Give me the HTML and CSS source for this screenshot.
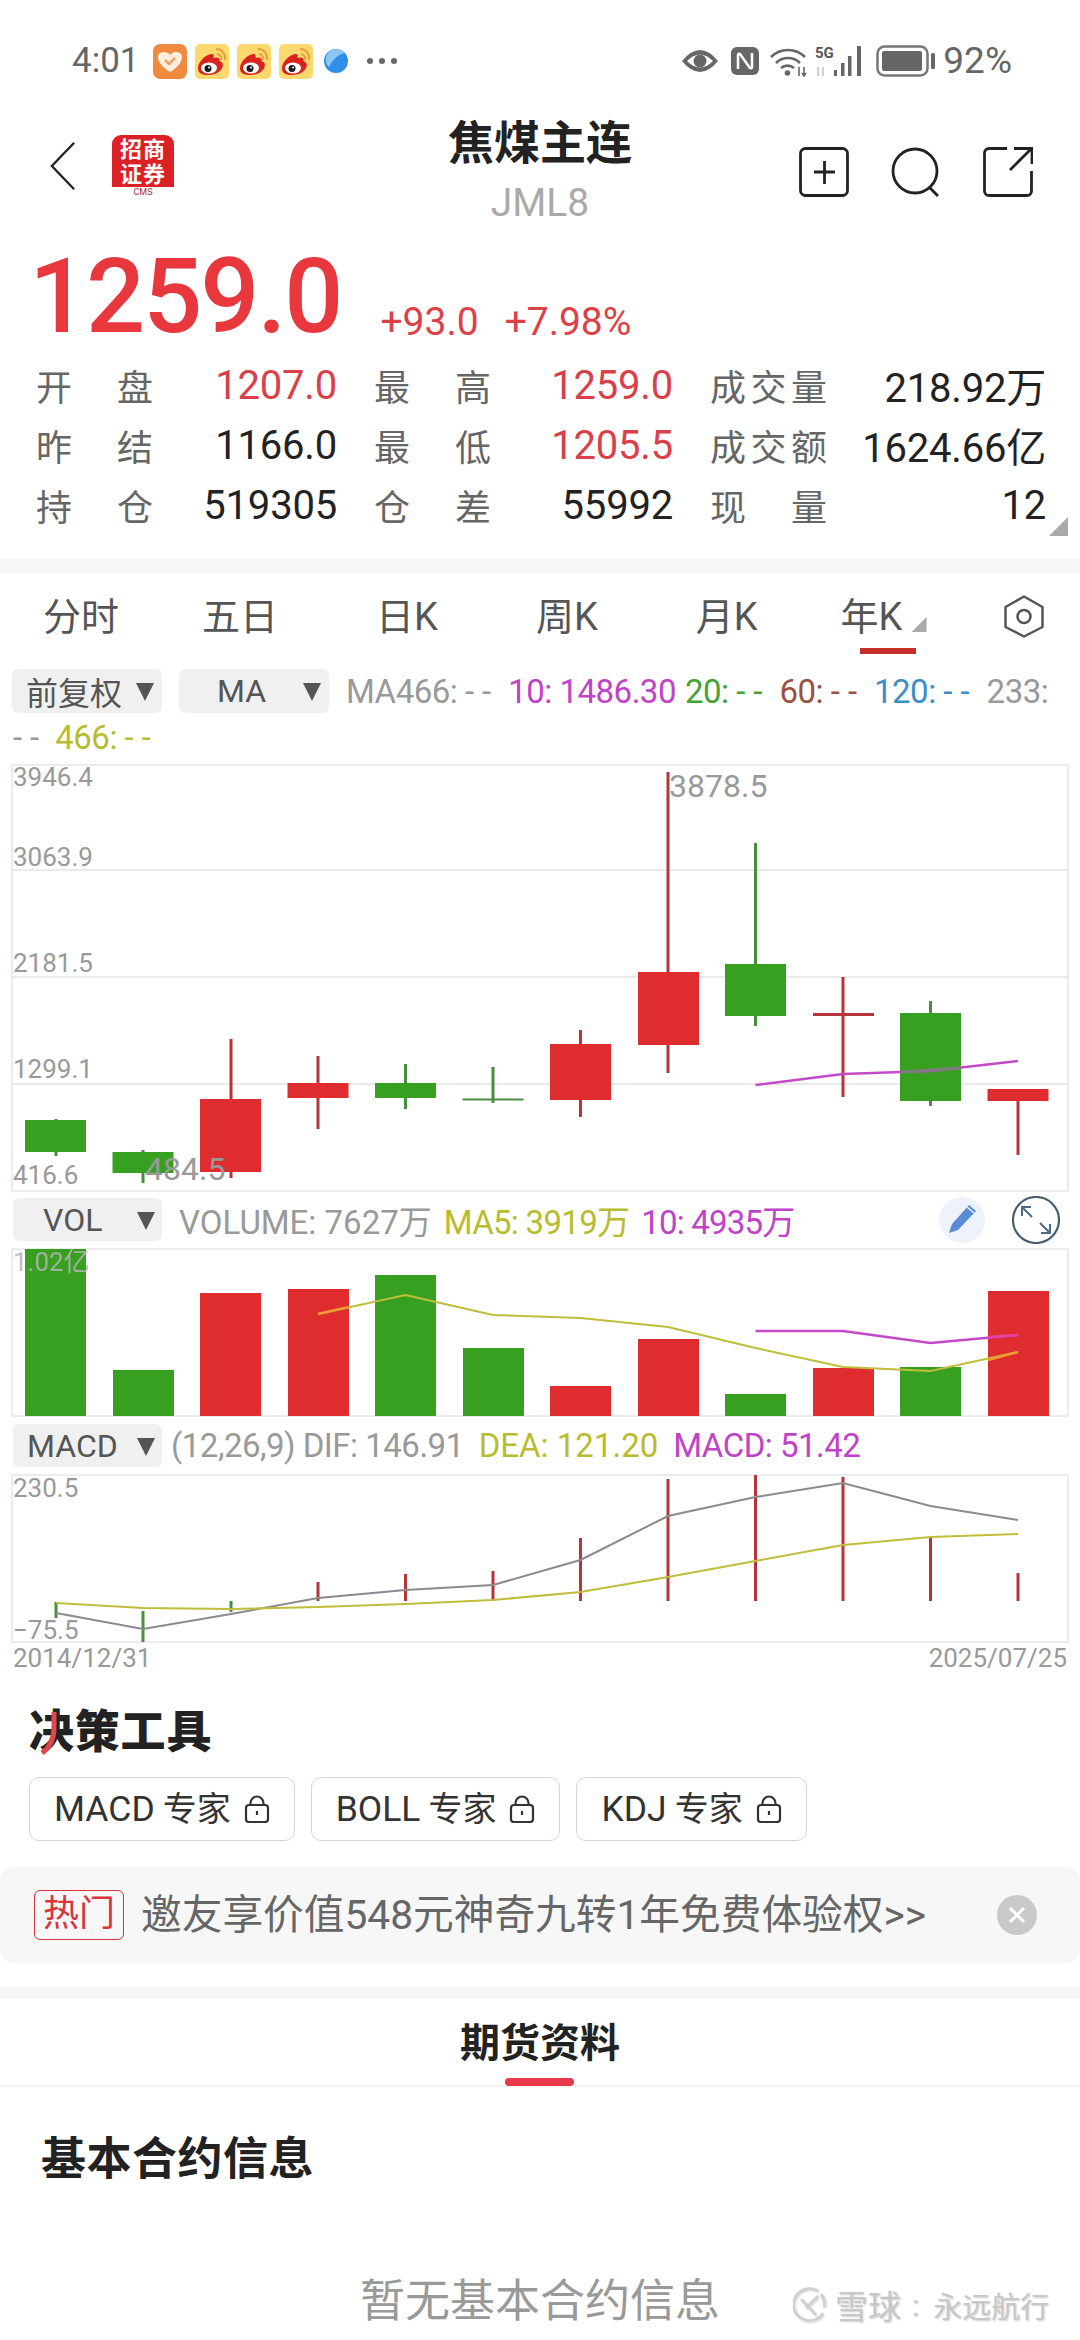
FILE: index.html
```html
<!DOCTYPE html>
<html lang="zh-CN">
<head>
    <meta charset="UTF-8">
    <title>焦煤主连</title>
    <link rel="stylesheet" href="styles.css">
</head>
<body>
<svg class="defs" width="0" height="0">
    <symbol id="weibo" viewBox="0 0 34 35">
        <rect width="34" height="35" rx="5" fill="#fbd96f"/>
        <path d="M3 24c0-6 7-13 13-14 3-.5 3 2 2.500 4 4-1.500 7 0 6 3 3 1 4 3 3 6-1.500 5-8 8-14 8S3 30 3 24z" fill="#d9231f"/>
        <ellipse cx="14" cy="24" rx="8" ry="5.500" fill="#fff"/>
        <circle cx="13" cy="24.500" r="3.500" fill="#1c1c1c"/>
        <circle cx="14" cy="23.500" r="1" fill="#fff"/>
        <path d="M21 5a9 9 0 0 1 9 11M22 10a4.500 4.500 0 0 1 4 6" fill="none" stroke="#e5a23a" stroke-width="2"/>
    </symbol>
    <symbol id="lock" viewBox="0 0 26 28">
        <rect x="2" y="10" width="22" height="17" rx="3" fill="none" stroke="#333" stroke-width="2.200"/>
        <path d="M6.500 10V8a6.500 6.500 0 0 1 13 0v2M13 16v4" fill="none" stroke="#333" stroke-width="2.200"/>
    </symbol>
</svg>

<div class="status">
    <div class="status-left">
        <span class="clock">4:01</span>
        <svg class="note" viewBox="0 0 34 35"><rect width="34" height="35" rx="7" fill="#ef8a3e"/><path d="M17 28C9 23 5 18 5 13c0-5 8-7 12-2 4-5 12-3 12 2 0 5-4 10-12 15z" fill="#fdeedd"/><path d="M12 16l4 4 6-6" fill="none" stroke="#eda262" stroke-width="2.500"/></svg>
        <svg class="note"><use href="#weibo"/></svg>
        <svg class="note"><use href="#weibo"/></svg>
        <svg class="note"><use href="#weibo"/></svg>
        <svg class="planet" viewBox="0 0 26 26"><circle cx="13" cy="13" r="12" fill="#2f8ee8"/><path d="M7 3a12 12 0 0 1 15 2C17 6 10 10 6 19 1 15 2 7 7 3z" fill="#8cc6f5"/></svg>
        <span class="more"><i></i><i></i><i></i></span>
    </div>
    <div class="status-right">
        <svg class="st-eye" viewBox="0 0 38 26"><path d="M1 13Q19-9 37 13 19 35 1 13z" fill="#666"/><path d="M6 13Q19 0 32 13 19 26 6 13z" fill="#fff"/><circle cx="19" cy="13" r="6.500" fill="#666"/></svg>
        <svg class="st-nfc" viewBox="0 0 28 28"><rect width="28" height="28" rx="6" fill="#666"/><path d="M7 22V8q0-2 2-1l10 14q2 1 2-1V6" fill="none" stroke="#fff" stroke-width="2.500"/></svg>
        <svg class="st-wifi" viewBox="0 0 38 32"><path d="M1 12a24 24 0 0 1 34 0M6 18a17 17 0 0 1 24 0M11 23a10 10 0 0 1 13 0" fill="none" stroke="#666" stroke-width="2.600"/><circle cx="17.500" cy="28" r="2.800" fill="#666"/><path d="M29 22v9M34 22v9M32 28l2 3 2-3" fill="none" stroke="#666" stroke-width="1.600"/></svg>
        <svg class="st-signal" viewBox="0 0 52 32">
            <text class="st-5g" x="0" y="13">5G</text>
            <path d="M3 22v9M8 22v9" stroke="#ccc" stroke-width="1.800"/>
            <rect x="19" y="25" width="3" height="6" fill="#666"/>
            <rect x="26" y="18" width="3.500" height="13" fill="#666"/>
            <rect x="33" y="11" width="3.500" height="20" fill="#666"/>
            <rect x="42" y="1" width="4" height="30" fill="#666"/>
        </svg>
        <svg class="st-battery" viewBox="0 0 60 32"><rect x="1.500" y="1.500" width="50" height="29" rx="7" fill="none" stroke="#777" stroke-width="2.500"/><rect x="6" y="6" width="40" height="20" rx="2" fill="#666"/><rect x="55" y="8" width="4" height="16" rx="1.500" fill="#666"/></svg>
        <span class="clock">92%</span>
    </div>
</div>

<div class="nav">
    <div class="nav-left">
        <svg class="back" viewBox="0 0 28 52"><path d="M26 1L2 26l24 25" fill="none" stroke="#222" stroke-width="2.500"/></svg>
        <div class="logo">
            <div class="logo-red"><span>招</span><span>商</span><span>证</span><span>券</span></div>
            <div class="logo-cms">CMS</div>
        </div>
    </div>
    <div class="nav-title">
        <div class="title">焦煤主连</div>
        <div class="code">JML8</div>
    </div>
    <div class="nav-right">
        <svg class="nav-icon" viewBox="0 0 50 50"><rect x="1.500" y="1.500" width="47" height="47" rx="5" fill="none" stroke="#222" stroke-width="2.800"/><path d="M15 25h21M25.500 14v23" stroke="#222" stroke-width="2.800"/></svg>
        <svg class="nav-icon" viewBox="0 0 50 50"><circle cx="24" cy="24" r="22" fill="none" stroke="#222" stroke-width="2.800"/><path d="M38 40l9 9" stroke="#222" stroke-width="2.800"/></svg>
        <svg class="nav-icon" viewBox="0 0 50 50"><path d="M24 1.500H6a4.500 4.500 0 0 0-4.500 4.500v38A4.500 4.500 0 0 0 6 48.500h38a4.500 4.500 0 0 0 4.500-4.500V24" fill="none" stroke="#222" stroke-width="2.800"/><path d="M27 23L48 2M31 1.500h18V17" fill="none" stroke="#222" stroke-width="2.800"/></svg>
    </div>
</div>

<div class="quote">
    <span class="price">1259.0</span>
    <span class="change">+93.0</span>
    <span class="change">+7.98%</span>
</div>

<div class="stats">
    <div class="stat"><span class="stat-label"><b>开</b><b>盘</b></span><span class="red">1207.0</span></div>
    <div class="stat"><span class="stat-label"><b>最</b><b>高</b></span><span class="red">1259.0</span></div>
    <div class="stat"><span class="stat-label"><b>成</b><b>交</b><b>量</b></span><span>218.92万</span></div>
    <div class="stat"><span class="stat-label"><b>昨</b><b>结</b></span><span>1166.0</span></div>
    <div class="stat"><span class="stat-label"><b>最</b><b>低</b></span><span class="red">1205.5</span></div>
    <div class="stat"><span class="stat-label"><b>成</b><b>交</b><b>额</b></span><span>1624.66亿</span></div>
    <div class="stat"><span class="stat-label"><b>持</b><b>仓</b></span><span>519305</span></div>
    <div class="stat"><span class="stat-label"><b>仓</b><b>差</b></span><span>55992</span></div>
    <div class="stat"><span class="stat-label"><b>现</b><b>量</b></span><span>12</span></div>
    <span class="corner"></span>
</div>

<div class="band band-top"></div>

<div class="tabs">
    <span class="tab">分时</span>
    <span class="tab tab-tight">五日</span>
    <span class="tab">日K</span>
    <span class="tab">周K</span>
    <span class="tab">月K</span>
    <span class="tab tab-tight tab-active">年K<i class="tab-mark"></i></span>
    <svg class="hex" viewBox="0 0 40 43"><path d="M20 1.500l18.500 10.500v20L20 41.500 1.500 32V12z" fill="none" stroke="#555" stroke-width="2.500" stroke-linejoin="round"/><circle cx="20" cy="21.500" r="6.500" fill="none" stroke="#555" stroke-width="2.500"/></svg>
</div>

<div class="legend-row">
    <span class="drop"><span class="drop-text">前复权</span><i class="arrow"></i></span>
    <span class="drop"><span class="drop-text drop-ma">MA</span><i class="arrow"></i></span>
    <span class="legend">
        <span class="gray">MA466: <span class="dash">--</span></span>
        <span class="magenta">10: 1486.30</span>
        <span class="green">20: <span class="dash">--</span></span>
        <span class="brown">60: <span class="dash">--</span></span>
        <span class="blue">120: <span class="dash">--</span></span>
        <span class="gray">233:</span>
    </span>
</div>
<div class="legend-row legend-wrap">
    <span class="gray"><span class="dash">--</span></span>
    <span class="olive">466: <span class="dash">--</span></span>
</div>

<svg class="chart chart-main" viewBox="0 764 1080 428">
    <rect class="frame" x="12" y="765" width="1056" height="426"/>
    <path class="grid" d="M12 870H1068M12 977H1068M12 1084H1068"/>
    <!-- wicks -->
    <path class="wick-g" d="M56 1119V1156M143 1150V1183M405.500 1064V1109M493 1067V1103M755.500 843V1026M930.500 1001V1106"/>
    <path class="wick-r" d="M231 1039V1178M318 1056V1129M580.500 1030V1117M668 772V1073M843 977V1097M1018 1089V1155"/>
    <!-- bodies -->
    <g class="up">
        <rect x="200" y="1099" width="61" height="73"/>
        <rect x="287.500" y="1083" width="61" height="15"/>
        <rect x="550" y="1044" width="61" height="56"/>
        <rect x="638" y="972" width="61" height="73"/>
        <rect x="987.500" y="1089" width="61" height="12"/>
    </g>
    <g class="down">
        <rect x="25" y="1120" width="61" height="32"/>
        <rect x="112.500" y="1152" width="61" height="21"/>
        <rect x="375" y="1083" width="61" height="15"/>
        <rect x="725" y="964" width="61" height="52"/>
        <rect x="900" y="1013" width="61" height="88"/>
    </g>
    <path class="wick-g thin" d="M462.500 1099.500H523.500"/>
    <path class="wick-r flat" d="M813 1014.500H874"/>
    <polyline class="line-purple" points="755.500,1085 843,1074 930.500,1071 1018,1061"/>
    <path class="line-gray2" d="M900 1072L961 1068"/>
    <text class="axis" x="13" y="786">3946.4</text>
    <text class="axis" x="13" y="866">3063.9</text>
    <text class="axis" x="13" y="972">2181.5</text>
    <text class="axis" x="13" y="1078">1299.1</text>
    <text class="axis" x="13" y="1184">416.6</text>
    <text class="peak" x="145" y="1180">484.5</text>
    <text class="peak" x="669" y="797">3878.5</text>
</svg>

<div class="ind-row ind-vol">
    <span class="drop drop-sub"><span class="drop-text drop-vol">VOL</span><i class="arrow"></i></span>
    <span class="ind-text ind-text-vol">
        <span class="gray">VOLUME: 7627万</span>
        <span class="olive">MA5: 3919万</span>
        <span class="magenta">10: 4935万</span>
    </span>
    <span class="ind-tools">
        <svg class="tool" viewBox="0 0 48 48"><circle cx="24" cy="24" r="23" fill="#eef2fa"/><path d="M31 9l7 6-18 19-9 3 3-9z" fill="#5a8bd6"/><path d="M29 11l7 6" stroke="#eef2fa" stroke-width="1.500"/></svg>
        <svg class="tool" viewBox="0 0 48 48"><circle cx="24" cy="24" r="23" fill="none" stroke="#465e6e" stroke-width="2.200"/><path d="M11 12l9 9M10 20v-9h9M37 36l-9-9M38 28v9h-9" fill="none" stroke="#4a6b82" stroke-width="2"/></svg>
    </span>
</div>

<svg class="chart chart-vol" viewBox="0 1249 1080 168">
    <rect class="frame" x="12" y="1249" width="1056" height="167"/>
    <g class="down">
        <rect x="25" y="1249" width="61" height="167"/>
        <rect x="113" y="1370" width="61" height="46"/>
        <rect x="375" y="1275" width="61" height="141"/>
        <rect x="463" y="1348" width="61" height="68"/>
        <rect x="725" y="1394" width="61" height="22"/>
        <rect x="900" y="1367" width="61" height="49"/>
    </g>
    <g class="up">
        <rect x="200" y="1293" width="61" height="123"/>
        <rect x="288" y="1289" width="61" height="127"/>
        <rect x="550" y="1386" width="61" height="30"/>
        <rect x="638" y="1339" width="61" height="77"/>
        <rect x="813" y="1368" width="61" height="48"/>
        <rect x="988" y="1291" width="61" height="125"/>
    </g>
    <polyline class="line-yellow" points="318,1314 405.500,1295 493,1315 580.500,1318 668,1327 755.500,1348 843,1367 930.500,1371 1018,1352"/>
    <polyline class="line-purple" points="755.500,1331 843,1331 930.500,1343 1018,1335"/>
    <path class="line-orange" d="M318 1314L349 1307M988 1360L1018 1352"/>
    <path class="line-pink" d="M988 1337L1018 1335"/>
    <text class="axis axis-soft" x="13" y="1271">1.02亿</text>
</svg>

<div class="ind-row ind-macd">
    <span class="drop drop-sub"><span class="drop-text drop-macd">MACD</span><i class="arrow"></i></span>
    <span class="ind-text ind-text-macd">
        <span class="gray narrow">(12,26,9) DIF: 146.91</span>
        <span class="olive">DEA: 121.20</span>
        <span class="magenta">MACD: 51.42</span>
    </span>
</div>

<svg class="chart chart-macd" viewBox="0 1475 1080 168">
    <rect class="frame" x="12" y="1475" width="1056" height="167"/>
    <path class="wick-g" d="M56 1602V1618M143 1611V1642M231 1601V1612"/>
    <path class="wick-r" d="M318 1582V1601M405.500 1574V1601M493 1571V1601M580.500 1538V1601M668 1479V1601M755.500 1475V1601M843 1477V1601M930.500 1537V1601M1018 1573V1601"/>
    <polyline class="line-gray" points="56,1613 143,1629 231,1614 318,1598 405.500,1590 493,1585 580.500,1560 668,1516 755.500,1497 843,1483 930.500,1506 1018,1520"/>
    <polyline class="line-yellow" points="56,1603 143,1608 231,1609 318,1607 405.500,1604 493,1600 580.500,1592 668,1577 755.500,1561 843,1545 930.500,1537 1018,1534"/>
    <text class="axis" x="13" y="1497">230.5</text>
    <text class="axis" x="13" y="1639">−75.5</text>
</svg>

<div class="dates"><span>2014/12/31</span><span>2025/07/25</span></div>

<div class="tools-title">决策工具<svg class="tools-stroke" viewBox="0 0 20 44"><path d="M15 1v16C15 28 10 37 3 42" fill="none" stroke="#e0474b" stroke-width="5"/></svg></div>

<div class="chips">
    <span class="chip">MACD <span class="chip-cn">专家</span><svg class="lock"><use href="#lock"/></svg></span>
    <span class="chip">BOLL <span class="chip-cn">专家</span><svg class="lock"><use href="#lock"/></svg></span>
    <span class="chip">KDJ <span class="chip-cn">专家</span><svg class="lock"><use href="#lock"/></svg></span>
</div>

<div class="banner">
    <span class="hot">热门</span>
    <span class="banner-text">邀友享价值548元神奇九转1年免费体验权&gt;&gt;</span>
    <svg class="close" viewBox="0 0 40 40"><circle cx="20" cy="20" r="20" fill="#c9c9c9"/><path d="M13 13l14 14M27 13L13 27" stroke="#fff" stroke-width="3"/></svg>
</div>

<div class="band band-bottom"></div>

<div class="info-tab"><span class="info-tab-text">期货资料<i class="info-tab-mark"></i></span></div>
<div class="info-title">基本合约信息</div>
<div class="info-empty">暂无基本合约信息</div>

<div class="watermark">
    <svg class="wm-logo" viewBox="0 0 34 36"><path d="M25 4A16 16 0 1 0 30 26M31 20A16 16 0 0 0 28 7" fill="none" stroke="#cfcfcf" stroke-width="2.500"/><path d="M8 12l15 16M25 9L13 21" fill="none" stroke="#cfcfcf" stroke-width="2.500"/></svg>
    <span class="wm-site">雪球</span>
    <span class="wm-colon">:</span>
    <span class="wm-name">永远航行</span>
</div>
</body>
</html>
```

FILE: styles.css
```css
* {
    box-sizing: border-box;
}

html, body {
    margin: 0;
    padding: 0;
}

body {
    width: 1080px;
    height: 2340px;
    overflow: hidden;
    position: relative;
    background: #fff;
    color: #222;
    font-family: Roboto, "Noto Sans CJK SC", sans-serif;
}

.defs {
    position: absolute;
}

/* status bar */
.status {
    height: 110px;
    padding: 12px 68px 0 72px;
    display: flex;
    justify-content: space-between;
    align-items: center;
}

.status-left, .status-right {
    display: flex;
    align-items: center;
}

.clock {
    font-size: 35px;
    color: #666;
    line-height: 40px;
}

.status-left .clock {
    margin-right: 13px;
}

.note {
    width: 34px;
    height: 35px;
    margin-right: 8px;
}

.planet {
    width: 26px;
    height: 26px;
    margin: 0 18px 0 2px;
}

.more {
    display: flex;
    gap: 6px;
}

.more i {
    width: 6px;
    height: 6px;
    border-radius: 50%;
    background: #666;
}

.status-right .clock {
    margin-left: 7px;
    font-size: 37px;
}

.st-eye {
    width: 38px;
    height: 26px;
    margin-right: 12px;
}

.st-nfc {
    width: 28px;
    height: 28px;
    margin-right: 11px;
}

.st-wifi {
    width: 38px;
    height: 32px;
    margin-right: 7px;
}

.st-signal {
    width: 52px;
    height: 32px;
    margin-right: 9px;
}

.st-5g {
    font-size: 15px;
    font-weight: 700;
    fill: #555;
}

.st-battery {
    width: 60px;
    height: 32px;
}

/* title bar */
.nav {
    height: 120px;
    padding: 0 49px 0 50px;
    display: flex;
    justify-content: space-between;
    position: relative;
}

.nav-left {
    display: flex;
    align-items: flex-start;
    gap: 36px;
    padding-top: 25px;
}

.back {
    width: 26px;
    height: 50px;
    margin-top: 6px;
}

.logo {
    width: 62px;
    height: 62px;
    border-radius: 9px;
    overflow: hidden;
    background: #fff;
}

.logo-red {
    height: 52px;
    padding: 3px 8px 0;
    background: #dc2126;
    color: #fff;
    display: grid;
    grid-template-columns: 23px 23px;
    font-size: 22px;
    font-weight: 700;
    line-height: 23px;
}

.logo-cms {
    font-size: 9px;
    line-height: 10px;
    text-align: center;
    color: #a33;
}

.nav-title {
    position: absolute;
    left: 0;
    right: 0;
    top: 0;
    text-align: center;
}

.title {
    font-size: 46px;
    font-weight: 700;
    line-height: 66px;
}

.code {
    font-size: 39px;
    line-height: 54px;
    color: #aaa;
}

.nav-right {
    display: flex;
    gap: 42px;
    padding-top: 37px;
    position: relative;
    left: 2px;
}

.nav-icon {
    width: 50px;
    height: 50px;
}

/* price */
.quote {
    height: 125px;
    padding: 12px 0 0 29px;
    display: flex;
    align-items: baseline;
    color: #e8383d;
}

.price {
    font-size: 104px;
    font-weight: 500;
    line-height: 110px;
    letter-spacing: -2px;
    margin-right: 39px;
}

.change {
    font-size: 39px;
    color: #dd4148;
    margin-right: 26px;
    transform: translateY(3px);
}

/* open, high, low ... */
.stats {
    height: 180px;
    padding-left: 36px;
    display: grid;
    grid-template-columns: 301px 299px 336px;
    grid-auto-rows: 60px;
    column-gap: 37px;
    position: relative;
    font-size: 40px;
    letter-spacing: -0.200px;
}

.stat {
    display: flex;
    justify-content: space-between;
    align-items: center;
    color: #222;
}

.stat-label {
    width: 117px;
    display: flex;
    justify-content: space-between;
    font-size: 36px;
    color: #666;
    letter-spacing: 0;
}

.stat-label b {
    font-weight: 400;
}

.red {
    color: #d9404a;
}

.corner {
    position: absolute;
    left: 1049px;
    top: 162px;
    width: 19px;
    height: 19px;
    background: #aaa;
    clip-path: polygon(100% 0, 100% 100%, 0 100%);
}

.band {
    background: #f7f7f7;
}

.band-top {
    height: 14px;
    margin-top: 24px;
}

/* period tabs */
.tabs {
    height: 95px;
    padding: 19px 0 0 43px;
    display: flex;
    align-items: flex-start;
    position: relative;
    font-size: 38px;
    line-height: 50px;
    color: #555;
}

.tab {
    margin-left: 98px;
    position: relative;
}

.tab:first-child {
    margin-left: 0;
}

.tab-tight {
    margin-left: 83px;
}

.tab-active::after {
    content: "";
    position: absolute;
    left: 19px;
    top: 56px;
    width: 56px;
    height: 6px;
    background: #c9302c;
}

.tab-mark {
    position: absolute;
    left: 71px;
    top: 25px;
    width: 15px;
    height: 15px;
    background: #aaa;
    clip-path: polygon(100% 0, 100% 100%, 0 100%);
}

.hex {
    position: absolute;
    left: 1004px;
    top: 22px;
    width: 40px;
    height: 43px;
}

/* dropdown + moving average legend */
.legend-row {
    height: 46px;
    padding-left: 12px;
    display: flex;
    align-items: center;
    gap: 17px;
    font-size: 33px;
    letter-spacing: -0.500px;
}

.legend-wrap {
    padding-left: 13px;
    gap: 8px;
}

.legend {
    display: flex;
    gap: 9px;
    white-space: nowrap;
}

.dash {
    letter-spacing: 8px;
}

.drop {
    width: 150px;
    height: 44px;
    background: #f0f0f0;
    border-radius: 6px;
    display: flex;
    align-items: center;
    position: relative;
    font-size: 32px;
    color: #555;
    letter-spacing: 0;
}

.drop-text {
    margin-left: 14px;
}

.drop-ma {
    margin-left: 38px;
}

.drop-vol {
    margin-left: 30px;
}

.drop-macd {
    margin-left: 14px;
}

.arrow {
    position: absolute;
    left: 124px;
    top: 14px;
    width: 18px;
    height: 18px;
    background: #555;
    clip-path: polygon(0 0, 100% 0, 50% 100%);
}

.gray {
    color: #999;
}

.magenta {
    color: #bf43c6;
}

.green {
    color: #46a033;
}

.brown {
    color: #9a5142;
}

.blue {
    color: #3b8ec6;
}

.olive {
    color: #b8bc2e;
}

/* charts */
.chart {
    display: block;
    width: 1080px;
    overflow: visible;
}

.chart-main {
    height: 428px;
    margin-top: 4px;
}

.chart-vol {
    height: 168px;
    margin-top: 8px;
}

.chart-macd {
    height: 168px;
    margin-top: 8px;
}

.frame {
    fill: none;
    stroke: #ececec;
    stroke-width: 2;
}

.grid {
    stroke: #e4e4e4;
    stroke-width: 1.500;
    fill: none;
}

.up {
    fill: #de2c2f;
}

.down {
    fill: #38a020;
}

.wick-r {
    stroke: #b5353a;
    stroke-width: 3;
    fill: none;
}

.wick-g {
    stroke: #4a8d3c;
    stroke-width: 3;
    fill: none;
}

.thin {
    stroke-width: 2;
}

.flat {
    stroke-width: 3;
}

.line-purple {
    fill: none;
    stroke: #c24ac9;
    stroke-width: 2.500;
}

.line-yellow {
    fill: none;
    stroke: #bfbd3a;
    stroke-width: 2;
}

.line-gray {
    fill: none;
    stroke: #8a8a90;
    stroke-width: 2;
}

.line-gray2 {
    fill: none;
    stroke: #7c7c7c;
    stroke-width: 3;
}

.line-orange {
    fill: none;
    stroke: #f09a30;
    stroke-width: 2.500;
}

.line-pink {
    fill: none;
    stroke: #e8409c;
    stroke-width: 2.500;
}

.axis {
    font-size: 26px;
    fill: #999;
}

.axis-soft {
    fill: #b4b4b4;
    opacity: 0.85;
}

.peak {
    font-size: 32px;
    fill: #999;
}

/* indicator rows */
.ind-row {
    height: 43px;
    padding-left: 13px;
    display: flex;
    align-items: center;
    font-size: 33px;
    position: relative;
}

.ind-vol {
    margin-top: 6px;
}

.ind-macd {
    margin-top: 7px;
}

.drop-sub {
    width: 149px;
    height: 43px;
}

.ind-text {
    display: flex;
    gap: 12px;
    white-space: nowrap;
}

.ind-text-vol {
    margin-left: 17px;
}

.ind-text-vol .olive {
    letter-spacing: -0.700px;
}

.ind-text-vol .magenta {
    letter-spacing: -0.800px;
}

.ind-text-macd {
    margin-left: 9px;
    gap: 15px;
}

.ind-text-macd .magenta {
    letter-spacing: -0.500px;
}

.narrow {
    letter-spacing: -0.500px;
}

.ind-tools {
    position: absolute;
    left: 938px;
    top: -2px;
    display: flex;
    gap: 26px;
}

.tool {
    width: 48px;
    height: 48px;
}

.dates {
    height: 30px;
    padding: 0 13px;
    display: flex;
    justify-content: space-between;
    font-size: 26px;
    line-height: 30px;
    color: #999;
}

/* decision tools */
.tools-title {
    width: 184px;
    margin: 30px 0 0 29px;
    position: relative;
    font-size: 45px;
    font-weight: 900;
    line-height: 60px;
    letter-spacing: 0.800px;
    color: #222;
}

.tools-stroke {
    position: absolute;
    left: 10px;
    top: 8px;
    width: 20px;
    height: 44px;
}

.chips {
    margin-top: 14px;
    padding-left: 29px;
    display: flex;
    gap: 16px;
}

.chip {
    height: 64px;
    padding: 0 24px;
    border: 1.500px solid #d4d4d4;
    border-radius: 10px;
    display: flex;
    align-items: center;
    gap: 8px;
    font-size: 35.500px;
    line-height: 56px;
    color: #333;
}

.chip-cn {
    font-size: 34px;
    margin-right: 5px;
}

.lock {
    width: 26px;
    height: 28px;
}

/* promo */
.banner {
    height: 96px;
    margin-top: 26px;
    padding: 0 43px 0 34px;
    background: #f7f7f7;
    border-radius: 14px;
    display: flex;
    align-items: center;
}

.hot {
    width: 90px;
    height: 50px;
    border: 1.500px solid #d9343c;
    border-radius: 6px;
    font-size: 36px;
    line-height: 46px;
    text-align: center;
    color: #d9343c;
}

.banner-text {
    margin-left: 17px;
    font-size: 40.700px;
    line-height: 46px;
    color: #666;
    white-space: nowrap;
}

.close {
    width: 40px;
    height: 40px;
    margin-left: auto;
}

.band-bottom {
    height: 13px;
    margin-top: 23px;
}

/* futures info */
.info-tab {
    height: 88px;
    padding-top: 20px;
    border-bottom: 2px solid #f2f2f2;
    text-align: center;
}

.info-tab-text {
    display: inline-block;
    position: relative;
    font-size: 40px;
    font-weight: 700;
    line-height: 50px;
}

.info-tab-mark {
    position: absolute;
    left: 45px;
    top: 59px;
    width: 69px;
    height: 8px;
    border-radius: 4px;
    background: #e8384a;
}

.info-title {
    margin: 43px 0 0 41px;
    font-size: 45px;
    font-weight: 700;
    line-height: 60px;
    letter-spacing: 0.500px;
}

.info-empty {
    margin-top: 82px;
    font-size: 45px;
    line-height: 60px;
    text-align: center;
    color: #999;
}

/* photo watermark over the page */
.watermark {
    position: absolute;
    left: 793px;
    top: 2278px;
    height: 54px;
    display: flex;
    align-items: center;
    color: #c8c8c8;
    white-space: nowrap;
    text-shadow: 1px 1px 2px rgba(0, 0, 0, 0.2);
}

.wm-logo {
    width: 34px;
    height: 36px;
    margin-right: 8px;
    filter: drop-shadow(1px 1px 1px rgba(0, 0, 0, 0.2));
}

.wm-site {
    font-size: 33px;
}

.wm-colon {
    font-size: 30px;
    margin: 0 14px 0 11px;
}

.wm-name {
    font-size: 29px;
}
```
